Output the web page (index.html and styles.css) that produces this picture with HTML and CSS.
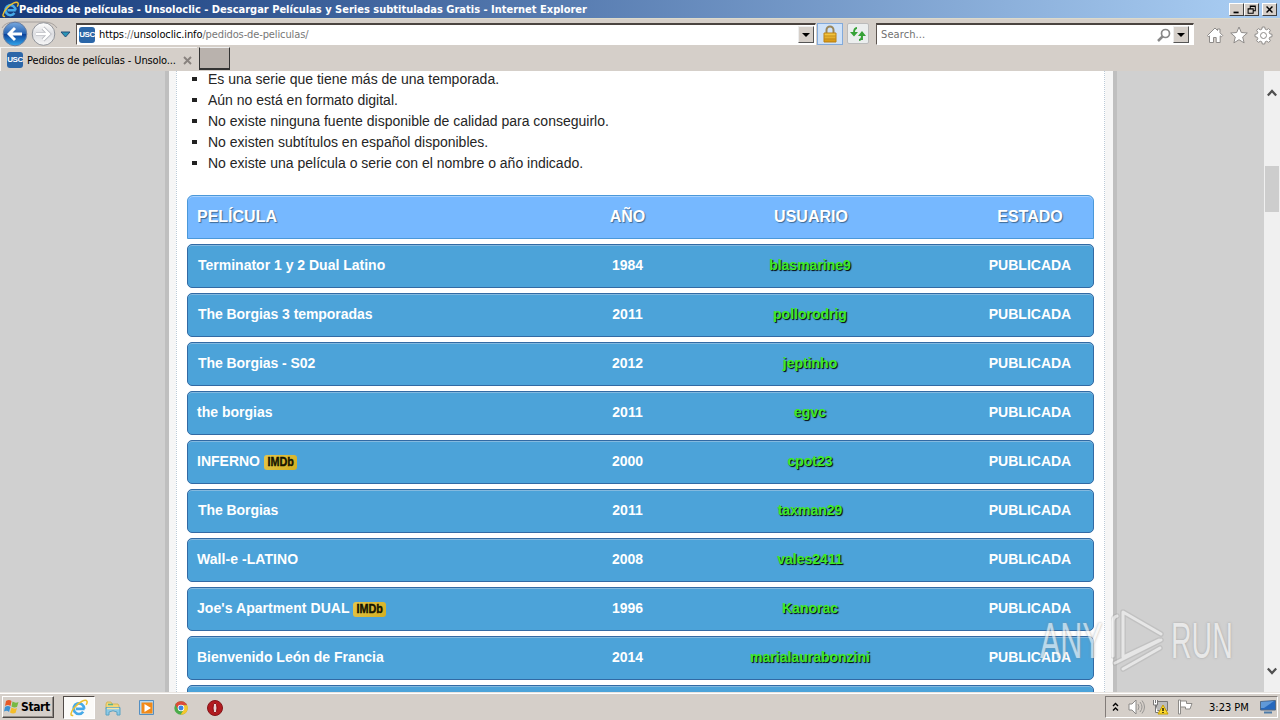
FILE: index.html
```html
<!DOCTYPE html>
<html lang="es">
<head>
<meta charset="utf-8">
<title>Pedidos de películas - Unsoloclic</title>
<link rel="stylesheet" href="styles.css">
</head>
<body>
<svg class="defs" width="0" height="0">
  <defs>
    <linearGradient id="ball" x1="0" y1="0" x2="0" y2="1"><stop offset="0" stop-color="#78a9df"/><stop offset=".48" stop-color="#2864b4"/><stop offset=".52" stop-color="#0d429a"/><stop offset="1" stop-color="#33a9ef"/></linearGradient>
    <linearGradient id="pale" x1="0" y1="0" x2="0" y2="1"><stop offset="0" stop-color="#fff"/><stop offset=".5" stop-color="#dcdde1"/><stop offset="1" stop-color="#f7f7f7"/></linearGradient>
    <linearGradient id="gold" x1="0" y1="0" x2="0" y2="1"><stop offset="0" stop-color="#f8ce48"/><stop offset="1" stop-color="#d39211"/></linearGradient>
    <symbol id="ie" viewBox="0 0 18 18">
      <path d="M14.6 9.800H5.800M14.200 9.800A5.300 5.300 0 1 0 13.200 12.800" fill="none" stroke="#46a9e8" stroke-width="2.700"/>
      <path d="M3.200 16.200C-.3 17.700.6 12.700 4.900 8 9.300 2.900 15.600-.2 17 2.300c.5 1-.2 2.500-.9 3.600" fill="none" stroke="#edc02f" stroke-width="1.500"/>
    </symbol>
  </defs>
</svg>
<div class="screen">
  <header class="titlebar">
    <svg class="title-icon" width="17" height="17"><use href="#ie"/></svg>
    <span class="title-text">Pedidos de películas - Unsoloclic - Descargar Películas y Series subtituladas Gratis - Internet Explorer</span>
    <div class="winbuttons">
      <svg class="wb" viewBox="0 0 15 13"><path d="M4 10h6" stroke="#000" stroke-width="2"/></svg>
      <svg class="wb" viewBox="0 0 15 13"><path d="M6 5V2.500h6V8H9.500M6 3h6M3.500 5.500h6V11h-6zM3.500 6h6" fill="none" stroke="#000" stroke-width="1.200"/></svg>
      <svg class="wb wb-close" viewBox="0 0 15 13"><path d="M4 3l7 7M11 3l-7 7" stroke="#000" stroke-width="1.700"/></svg>
    </div>
  </header>

  <nav class="toolbar">
    <svg class="navbtns" width="75" height="26" viewBox="0 0 75 26">
      <path d="M2 7Q5 1 15 1h29q9 0 13 6" fill="none" stroke="#a5a09d"/>
      <circle cx="15" cy="13" r="11.800" fill="url(#ball)" stroke="#667da3"/>
      <path d="M22 13H9.500M15 7l-6 6 6 6" fill="none" stroke="#fff" stroke-width="2.900"/>
      <circle cx="43.500" cy="13" r="11.300" fill="url(#pale)" stroke="#92959b"/>
      <path d="M36 13h12.500M43 7l6 6-6 6" fill="none" stroke="#b8bac0" stroke-width="4"/>
      <path d="M36 13h12.500M43 7l6 6-6 6" fill="none" stroke="#fff" stroke-width="2.400"/>
      <path d="M61 11h9l-4.500 5z" fill="#2995b7" stroke="#254e79"/>
    </svg>
    <div class="address">
      <span class="usc">USC</span>
      <span class="url">https<i>://</i>unsoloclic.info<i>/pedidos-de-peliculas/</i></span>
      <span class="drop"></span>
    </div>
    <span class="lock"><svg width="14" height="18" viewBox="0 0 14 18"><path d="M3.500 9V5a3.500 3.500 0 0 1 7 0v4" fill="none" stroke="#99865a" stroke-width="2"/><path d="M1 8h12v9H1z" fill="url(#gold)" stroke="#bb8010"/><path d="M1.500 11h11M1.500 14h11" stroke="#ad740e" opacity=".6"/></svg></span>
    <span class="refresh"><svg width="16" height="14" viewBox="0 0 16 14"><path d="M7 1Q4 1 4 6M12 13V8M9 13q3 0 3-5" fill="none" stroke="#36a237" stroke-width="1.900"/><path d="M0 5h8L4 9.500zM8 9h8l-4-5z" fill="#36a237"/></svg></span>
    <div class="search"><span>Search...</span>
      <svg width="14" height="14" viewBox="0 0 14 14"><circle cx="8.500" cy="5.500" r="4" fill="none" stroke="#888" stroke-width="1.700"/><path d="M5.500 8.500L1 13" stroke="#888" stroke-width="2.500"/></svg>
      <span class="drop"></span>
    </div>
    <svg class="tools" width="70" height="20" viewBox="0 0 70 20">
      <g fill="#fff" stroke="#8e8b89">
        <path d="M1.500 10.500L9 3l2.500 2.500V4h2.500v3.800l2.700 2.700-1.300 1.300-1.200-1V17.500h-4V12.500H7.500v5h-4v-6.700l-1 1z"/>
        <path d="M33 2l2.300 5.500 6 .5-4.600 4 1.400 5.900-5.100-3.200-5.100 3.200 1.400-5.900-4.600-4 6-.5z"/>
        <path d="M56.300 2h2.400l.5 2.200 1.500.6 2-1.200 1.700 1.700-1.200 2 .6 1.500 2.200.5v2.400l-2.200.5-.6 1.500 1.200 2-1.700 1.700-2-1.200-1.500.6-.5 2.200h-2.400l-.5-2.200-1.500-.6-2 1.200-1.700-1.700 1.200-2-.6-1.500-2.200-.5V9.300l2.200-.5.6-1.500-1.200-2 1.700-1.700 2 1.200 1.500-.6z"/>
        <circle cx="57.500" cy="10.500" r="3"/>
      </g>
    </svg>
  </nav>

  <div class="tabs">
    <div class="tab"><span class="usc">USC</span><span class="tab-label">Pedidos de películas - Unsolo...</span>
      <svg width="9" height="9" viewBox="0 0 9 9"><path d="M1 1l7 7M8 1L1 8" stroke="#88827e" stroke-width="1.900"/></svg></div>
    <div class="newtab"></div>
  </div>

  <main class="viewport">
    <div class="page">
      <div class="content">
        <ul class="rules">
          <li>Es una serie que tiene más de una temporada.</li>
          <li>Aún no está en formato digital.</li>
          <li>No existe ninguna fuente disponible de calidad para conseguirlo.</li>
          <li>No existen subtítulos en español disponibles.</li>
          <li>No existe una película o serie con el nombre o año indicado.</li>
        </ul>
        <div class="table">
          <div class="row head"><span class="name">PELÍCULA</span><span>AÑO</span><span>USUARIO</span><span>ESTADO</span></div>
          <div class="row"><span class="name inset">Terminator 1 y 2 Dual Latino</span><span>1984</span><span class="user">blasmarine9</span><span>PUBLICADA</span></div>
          <div class="row"><span class="name inset tight">The Borgias 3 temporadas</span><span>2011</span><span class="user">pollorodrig</span><span>PUBLICADA</span></div>
          <div class="row"><span class="name inset tight">The Borgias - S02</span><span>2012</span><span class="user">jeptinho</span><span>PUBLICADA</span></div>
          <div class="row"><span class="name">the borgias</span><span>2011</span><span class="user">egvc</span><span>PUBLICADA</span></div>
          <div class="row"><span class="name">INFERNO <b class="imdb"><i>IMDb</i></b></span><span>2000</span><span class="user">cpot23</span><span>PUBLICADA</span></div>
          <div class="row"><span class="name inset tight">The Borgias</span><span>2011</span><span class="user">taxman29</span><span>PUBLICADA</span></div>
          <div class="row"><span class="name loose">Wall-e -LATINO</span><span>2008</span><span class="user">vales2411</span><span>PUBLICADA</span></div>
          <div class="row"><span class="name loose">Joe's Apartment DUAL <b class="imdb"><i>IMDb</i></b></span><span>1996</span><span class="user">Kanorac</span><span>PUBLICADA</span></div>
          <div class="row"><span class="name">Bienvenido León de Francia</span><span>2014</span><span class="user">marialaurabonzini</span><span>PUBLICADA</span></div>
          <div class="row"></div>
        </div>
      </div>
    </div>
    <div class="scrollbar">
      <svg width="10" height="8" viewBox="0 0 10 8"><path d="M.8 6.500L5 2l4.200 4.500" fill="none" stroke="#505050" stroke-width="2.300"/></svg>
      <div class="thumb"></div>
      <svg width="10" height="8" viewBox="0 0 10 8"><path d="M.8 1.500L5 6l4.200-4.500" fill="none" stroke="#505050" stroke-width="2.300"/></svg>
    </div>
    <div class="watermark">
      <span class="wm-any">ANY</span>
      <svg width="56" height="64" viewBox="0 0 56 64"><g fill="none" stroke-linecap="round" stroke-linejoin="round"><path d="M6 7Q2 8 2 13v34M12 42V3l38 22M12 14v34l36-17M4 54l46-23M12 60l37-21" stroke="#999" stroke-width="5.500" opacity=".4"/><path d="M6 7Q2 8 2 13v34M12 42V3l38 22M12 14v34l36-17M4 54l46-23M12 60l37-21" stroke="#f3f3f3" stroke-width="3"/></g></svg>
      <span class="wm-run">RUN</span>
    </div>
  </main>

  <footer class="taskbar">
    <div class="start">
      <svg width="16" height="16" viewBox="0 0 16 16"><path d="M2 2q3-2 5.500 0L6.500 7Q4 5 1 7z" fill="#e65927"/><path d="M8.500 2.500q3 2 6 .5L13 8q-3 1-5.500-.5z" fill="#77b943"/><path d="M1 8q3-2 5.500 0L5 13q-2-2-5-.5z" fill="#3d91d2"/><path d="M7.500 8.500q3 2 5.500.5l-1.500 5q-3 1-5.500-.5z" fill="#f4bd2a"/></svg>
      <span>Start</span>
    </div>
    <div class="task active"><svg width="18" height="18"><use href="#ie"/></svg></div>
    <div class="task"><svg width="18" height="18" viewBox="0 0 18 18"><path d="M2 5l1-2h4l1 2h6l1 2v3H2z" fill="#f3d778" stroke="#d3b65a"/><path d="M4 5.500h5" stroke="#5bb38b" stroke-width="1.500"/><path d="M2 8.500h14V16h-3v-3q-4-2.500-8 0v3H2z" fill="#8cc9e6" stroke="#5aa3c4"/><path d="M3 9.500h12" stroke="#f5e5a4" stroke-width="1.500"/></svg></div>
    <div class="task"><svg width="18" height="18" viewBox="0 0 18 18"><path d="M1.500 1.500h14v14h-14z" fill="#b6d8ef" stroke="#548fc2"/><path d="M3.500 3.500h11v11h-11z" fill="#f28a18"/><path d="M6.500 5l6.500 4-6.500 4z" fill="#fff"/></svg></div>
    <div class="task"><svg width="16" height="16" viewBox="0 0 18 18"><circle cx="9" cy="9" r="7.500" fill="#4bac4a"/><path d="M2.500 5.200A7.500 7.500 0 0 1 16 6H9L6 11z" fill="#dc4b39"/><path d="M16 6a7.500 7.500 0 0 1-7.500 10.500L12 11 9 6z" fill="#f6c62d"/><circle cx="9" cy="9" r="3.700" fill="#fff"/><circle cx="9" cy="9" r="2.800" fill="#3b84e1"/></svg></div>
    <div class="task"><svg width="18" height="18" viewBox="0 0 18 18"><circle cx="9" cy="9" r="7.500" fill="#b31b1f" stroke="#831519"/><ellipse cx="9" cy="9" rx="2" ry="5" fill="#e8d5d4" stroke="#8a0a10"/></svg></div>
    <div class="tray">
      <svg class="chev" width="7" height="10" viewBox="0 0 7 10"><path d="M1 4l2.500-2.500L6 4M1 8.500L3.500 6 6 8.500" fill="none" stroke="#000" stroke-width="1.400"/></svg>
      <svg class="vol" width="17" height="16" viewBox="0 0 17 16"><path d="M1 5h3l4-4v14l-4-4H1z" fill="#fff" stroke="#8b8987"/><path d="M10 5q2 3 0 6M12 3q4 5 0 10M14 1.500q5 6.500 0 13" fill="none" stroke="#979593"/></svg>
      <svg class="net" width="17" height="16" viewBox="0 0 17 16"><path d="M4.500 2.500h11v9h-11z" fill="#bbb" stroke="#777"/><path d="M7 14.500h7" stroke="#666"/><path d="M1.500 1v5h4V1M3.500 6v7.500H6M3.500 1v3" fill="#fff" stroke="#777"/><path d="M11 6l5 9H6z" fill="#fbd92f" stroke="#c69d00"/><path d="M11 9v3M11 13v1" stroke="#000" stroke-width="1.300"/></svg>
      <svg class="flag" width="16" height="16" viewBox="0 0 16 16"><path d="M1.500 1v14h2V1zM3.500 2h6v2.500H15L13 10H8.500V8h-5z" fill="#fff" stroke="#8d8b88"/></svg>
      <span class="clock">3:23 PM</span>
      <svg class="desk" width="16" height="14" viewBox="0 0 16 14"><path d="M.5 1.500l15-1v9.500H.5z" fill="#2668bd" stroke="#526985"/><path d="M1 2l13-1L4 8H1z" fill="#6099d8"/><path d="M4 12.500h8" stroke="#4e7ca8" stroke-width="2"/></svg>
    </div>
  </footer>
</div>
</body>
</html>
```
FILE: styles.css
```css
* { box-sizing: border-box; }
body { margin: 0; }
.defs { position: absolute; }
.screen { width: 1280px; height: 720px; overflow: hidden; display: flex; flex-direction: column; background: #d5cfc9; font-family: "DejaVu Sans Condensed", "DejaVu Sans", sans-serif; font-stretch: condensed; font-size: 11px; color: #000; }
svg { display: block; flex: none; }

.titlebar { height: 18px; flex: none; display: flex; align-items: center; padding: 0 3px 0 2px; background: linear-gradient(90deg, #153a7b, #a6caf0 96%); }
.title-text { color: #fff; font-weight: bold; font-size: 11px; white-space: nowrap; }
.winbuttons { margin-left: auto; display: flex; }
.wb { width: 15px; height: 13px; background: #d5cfc9; border: 1px solid; border-color: #fff #404040 #404040 #fff; }
.wb-close { margin-left: 3px; }

.toolbar { height: 29px; flex: none; display: flex; align-items: flex-start; padding-top: 4px; border-top: 1px solid #dcdacb; }
.navbtns { margin-top: -2px; }
.address, .search { height: 22px; display: flex; align-items: center; background: #fff; border: 1px solid #fff; border-top: 2px solid #4b4440; border-left: 1px solid #5d5550; }
.address { width: 740px; margin-left: 1px; padding: 0 1px 0 2px; }
.usc { width: 16px; height: 16px; flex: none; border-radius: 3px; background: #2b66a8; color: #fff; font: bold 8px/16px "Liberation Sans", sans-serif; text-align: center; letter-spacing: -.4px; }
.url { margin-left: 4px; letter-spacing: -.12px; }
.url i { font-style: normal; color: #777; }
.drop { width: 16px; height: 17px; margin-left: auto; display: flex; align-items: center; justify-content: center; background: #d5cfc9; border: 1px solid; border-color: #eee #555 #555 #eee; }
.drop::after { content: ""; border: 4px solid transparent; border-top-color: #000; border-bottom: 0; }
.lock { width: 26px; height: 22px; margin-left: 1px; display: grid; place-items: center; background: #cfe2f8; border: 1px solid #82aadb; }
.refresh { width: 22px; height: 21px; margin-left: 4px; display: grid; place-items: center; background: #ebeeee; border: 1px solid #bbb; border-radius: 2px; }
.search { width: 318px; margin-left: 7px; padding-left: 4px; padding-right: 4px; color: #717171; letter-spacing: .1px; }
.search svg { margin-left: auto; }
.search .drop { margin-left: 2px; }
.tools { margin: 2px 0 0 12px; }

.tabs { height: 24px; flex: none; display: flex; }
.tab { width: 197px; display: flex; align-items: center; padding: 1px 0 0 6px; border-top: 1px solid #f6f4f2; border-left: 1px solid #f6f4f2; }
.tab-label { width: 153px; margin-left: 4px; margin-right: 3px; white-space: nowrap; letter-spacing: -.13px; }
.newtab { width: 31px; height: 23px; margin-left: 2px; background: #b9b2ad; border: 1px solid; border-color: #eee #333 #333 #333; border-bottom-width: 2px; }

.viewport { height: 621px; flex: none; display: flex; position: relative; overflow: hidden; background: #d0d0d0; }
.page { width: 952px; margin-left: 165px; border: solid #bfbfbf; border-width: 0 4px; padding: 0 8px 0 7px; background: #f6f6f6; }
.content { height: 621px; padding: 0 10px; background: #fff; border: dotted #bccbd8; border-width: 0 1px; overflow: hidden; font-family: "Liberation Sans", Arial, sans-serif; font-stretch: normal; }
.rules { margin: -2px 0 0; padding: 0 0 0 21px; list-style: none; font-size: 14px; line-height: 21px; color: #252525; }
.rules li { display: flex; align-items: center; white-space: nowrap; }
.rules li::before { content: ""; width: 5px; height: 4px; margin: 0 11px 1px -16px; background: #222; }
.table { width: 907px; margin-top: 21px; display: grid; row-gap: 5px; }
.row { height: 44px; display: grid; grid-template-columns: 412px 55px 312px 126px; align-items: center; text-align: center; padding-bottom: 2px; background: #4ca3d9; border: 1px solid #326aa4; border-radius: 5px; box-shadow: inset 0 1px 0 #83b9df; color: #fff; font-weight: bold; font-size: 14px; }
.head { padding-bottom: 0; background: #76b8ff; border-color: #4b98d9; border-radius: 6px 6px 0 0; box-shadow: inset 0 1px 0 #a9d2ff; font-size: 16px; text-shadow: 1px 1px 1px #3e6994; }
.name { text-align: left; padding-left: 9px; line-height: 16px; }
.inset { padding-left: 10px; }
.tight { letter-spacing: -.06px; }
.loose { letter-spacing: .06px; }
.user { padding-right: 2px; color: #3eea28; text-shadow: 1px 1px 1px #000; }
.imdb { display: inline-grid; place-items: center; width: 33px; height: 15px; margin: -4px 0; vertical-align: 0; border-radius: 3px; background: linear-gradient(135deg, #e3c64d, #d5ae1e); color: #171500; font: bold 12px/15px "Liberation Sans Narrow", "Liberation Sans", sans-serif; letter-spacing: 0; }
.imdb i { font-style: normal; transform: scaleX(.9); -webkit-text-stroke: .4px #171500; }
.scrollbar { width: 16px; margin-left: auto; padding: 18px 0 17px; display: flex; flex-direction: column; align-items: center; background: #f0f0f0; }
.thumb { width: 14px; height: 46px; margin-top: 69px; margin-bottom: auto; background: #cdcdcd; }
.watermark { position: absolute; left: 1040px; top: 538px; width: 193px; height: 64px; display: flex; align-items: center; color: #f5f5f5; opacity: .65; font: 50px/64px "Liberation Sans", sans-serif; text-shadow: 0 0 3px #888; }
.watermark span { width: 62px; transform-origin: left; transform: scaleX(.61); }
.watermark svg { margin: 0 4px 0 9px; }
.watermark .wm-run { transform: scaleX(.57); }

.taskbar { height: 28px; flex: none; display: flex; align-items: flex-start; padding: 3px 2px 0; border-top: 1px solid #e9e5e1; box-shadow: inset 0 1px 0 #fff; }
.start { width: 52px; height: 22px; display: flex; align-items: center; padding-left: 1px; gap: 1px; border: 1px solid; border-color: #fff #4c4845 #4c4845 #fff; box-shadow: inset -1px -1px 0 #928d88; font-weight: bold; font-size: 12px; letter-spacing: -.4px; }
.task { width: 32px; height: 23px; margin-right: 2px; display: grid; place-items: center; }
.active { margin-left: 9px; background: #fbfaf8; border: 1px solid; border-color: #514b48 #fff #fff #514b48; }
.tray { width: 173px; height: 22px; margin-left: auto; display: flex; align-items: center; padding-left: 6px; border: 1px solid; border-color: #827c78 #fff #fff #827c78; }
.vol { margin-left: 9px; }
.net { margin-left: 7px; }
.flag { margin-left: 8px; }
.clock { margin-left: 16px; width: 40px; white-space: nowrap; }
.desk { margin-left: 11px; }
```
